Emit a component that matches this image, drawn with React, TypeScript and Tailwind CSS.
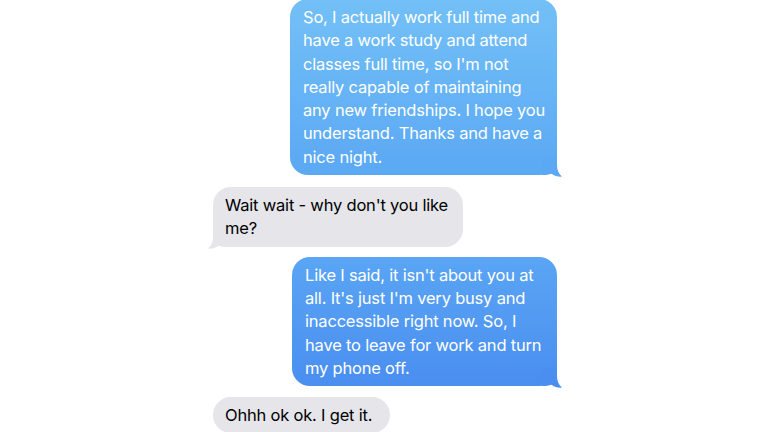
import React from "react";

const font = { fontFamily: "Inter, 'Noto Sans', sans-serif" };

function TailRight({ color }: { color: string }) {
  return (
    <svg
      className="absolute right-[-5px] bottom-[-2px] z-0"
      width="20"
      height="20"
      viewBox="0 0 20 20"
    >
      <path
        d="M0 0 L15 0 L15 8 C15 13 16.5 16.5 20 19.6 C16 19.9 12.5 19 9.5 16.8 C7 17.7 4 18 0 18 Z"
        fill={color}
      />
    </svg>
  );
}

function TailLeft({ color }: { color: string }) {
  return (
    <svg
      className="absolute left-[-5px] bottom-[-2px] z-0"
      width="20"
      height="20"
      viewBox="0 0 20 20"
    >
      <path
        d="M20 0 L5 0 L5 8 C5 13 3.5 16.5 0 19.6 C4 19.9 7.5 19 10.5 16.8 C13 17.7 16 18 20 18 Z"
        fill={color}
      />
    </svg>
  );
}

export default function App() {
  return (
    <div
      className="w-[768px] h-[432px] bg-white overflow-hidden flex flex-col"
      style={font}
    >
      <div className="flex flex-col mt-[-1px] text-[16.5px] leading-[23.3px] tracking-[-0.2px]">
        <div className="flex justify-end pr-[211px]">
          <div className="relative w-[267px] rounded-[18px] bg-gradient-to-b from-[#73c0f7] to-[#5ba8f4] text-white px-[13px] pt-[7px] pb-[6px] whitespace-nowrap">
            <span className="relative z-10">
              So, I actually work full time and
              <br />
              have a work study and attend
              <br />
              classes full time, so I'm not
              <br />
              really capable of maintaining
              <br />
              any new friendships. I hope you
              <br />
              understand. Thanks and have a
              <br />
              nice night.
            </span>
            <TailRight color="#5ba8f4" />
          </div>
        </div>
        <div className="flex justify-start pl-[213px] mt-[12px]">
          <div className="relative w-[250px] rounded-[18px] bg-[#e5e5ea] text-black px-[12px] pt-[7px] pb-[6px] whitespace-nowrap">
            <span className="relative z-10">
              Wait wait - why don't you like
              <br />
              me?
            </span>
            <TailLeft color="#e5e5ea" />
          </div>
        </div>
        <div className="flex justify-end pr-[211px] mt-[10px]">
          <div className="relative w-[265px] rounded-[18px] bg-gradient-to-b from-[#5aa5f4] to-[#4a8ef0] text-white px-[13px] pt-[7px] pb-[6px] whitespace-nowrap">
            <span className="relative z-10">
              Like I said, it isn't about you at
              <br />
              all. It's just I'm very busy and
              <br />
              inaccessible right now. So, I
              <br />
              have to leave for work and turn
              <br />
              my phone off.
            </span>
            <TailRight color="#4a8ef0" />
          </div>
        </div>
        <div className="flex justify-start pl-[213px] mt-[11px]">
          <div className="relative w-[177px] rounded-[18px] bg-[#e5e5ea] text-black px-[12px] pt-[7px] pb-[6px] whitespace-nowrap">
            <span className="relative z-10">Ohhh ok ok. I get it.</span>
          </div>
        </div>
      </div>
    </div>
  );
}
